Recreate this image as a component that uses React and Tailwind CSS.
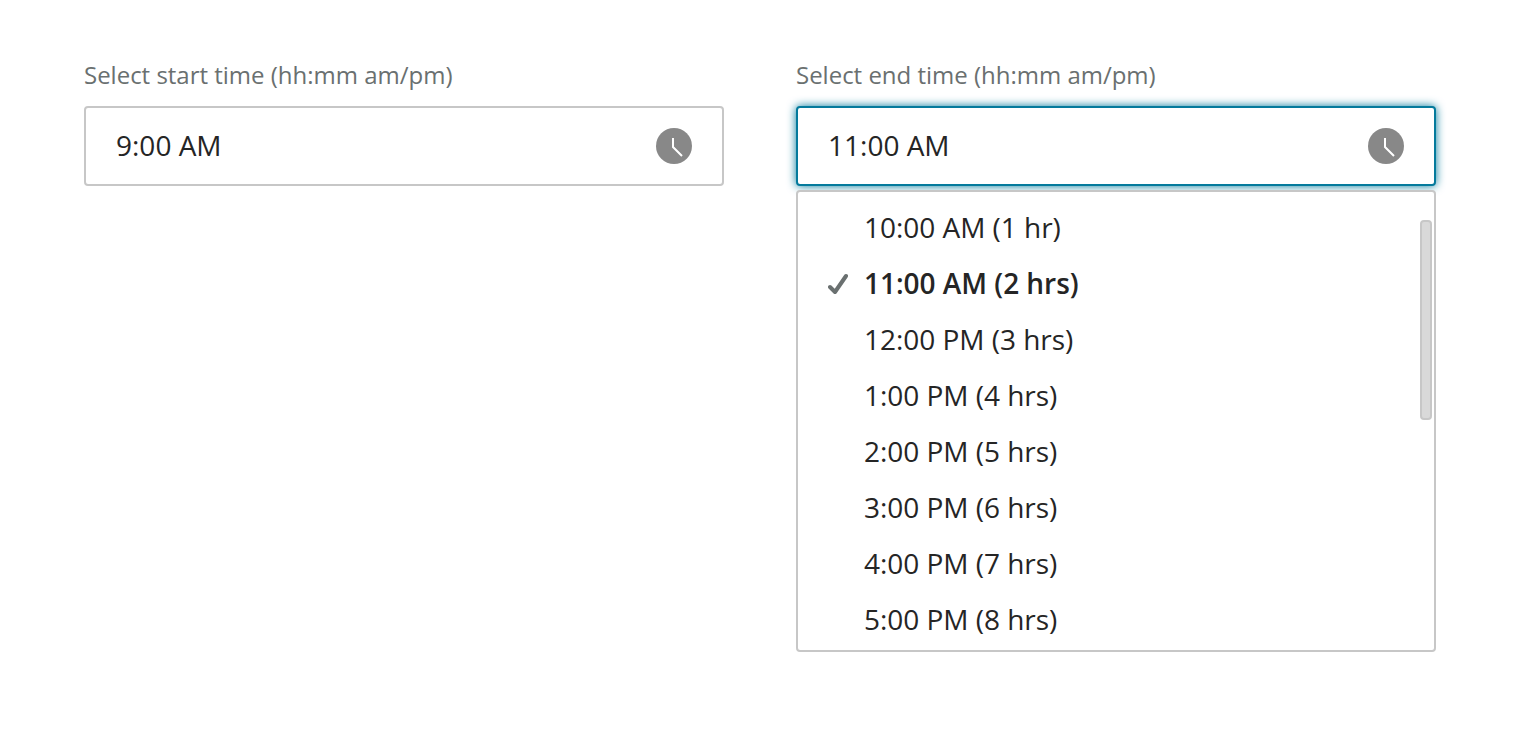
const options = [
  "10:00 AM (1 hr)",
  "11:00 AM (2 hrs)",
  "12:00 PM (3 hrs)",
  "1:00 PM (4 hrs)",
  "2:00 PM (5 hrs)",
  "3:00 PM (6 hrs)",
  "4:00 PM (7 hrs)",
  "5:00 PM (8 hrs)",
];

function ClockIcon() {
  return (
    <svg width="36" height="36" viewBox="0 0 36 36" fill="none">
      <circle cx="18" cy="18" r="18" fill="#888888" />
      <path d="M17 10V19L26 28" stroke="#ffffff" strokeWidth="2" />
    </svg>
  );
}

function CheckIcon() {
  return (
    <svg width="20" height="22" viewBox="0 0 20 22" fill="none">
      <path d="M2 14L7 19L18 3" stroke="#6a7070" strokeWidth="4" strokeLinecap="round" strokeLinejoin="round" />
    </svg>
  );
}

function TimeField({ label, value, focused }) {
  return (
    <>
      <div className="h-[43px] text-[24px] leading-[24px] tracking-[-0.01px] text-[#6a7070]">{label}</div>
      <div
        className={
          focused
            ? "flex h-20 items-center justify-between rounded-[4px] border-2 border-[#047a9c] bg-white px-[30px] shadow-[0_0_10px_#047a9c]"
            : "flex h-20 items-center justify-between rounded-[4px] border-2 border-[#c7c7c7] bg-white px-[30px]"
        }
      >
        <span className="pb-[2px] text-[28px] leading-[40px]">{value}</span>
        <ClockIcon />
      </div>
    </>
  );
}

export default function App() {
  return (
    <main className="flex h-[736px] items-start gap-[72px] bg-white pt-[63px] pl-[84px] font-['Open_Sans',sans-serif] text-[#252525] antialiased">
      <section className="w-[640px]">
        <TimeField label="Select start time (hh:mm am/pm)" value="9:00 AM" />
      </section>
      <section className="w-[640px]">
        <TimeField label="Select end time (hh:mm am/pm)" value="11:00 AM" focused />
        <div className="mt-1 flex h-[462px] justify-between overflow-hidden rounded-[4px] border-2 border-[#c7c7c7] bg-white">
          <ul className="pt-2 pl-[30px]">
            {options.map((option, i) => (
              <li key={option} className="flex h-14 items-center text-[28px] leading-[40px] tracking-[-0.03px]">
                <span className="w-9">{i === 1 && <CheckIcon />}</span>
                <span className={i === 1 ? "pb-[2px] font-semibold" : "pb-[2px]"}>{option}</span>
              </li>
            ))}
          </ul>
          <div className="mt-7 mr-[2px] h-[200px] w-3 rounded-[4px] border-2 border-[#c7c7c7] bg-[#d9d9d9]" />
        </div>
      </section>
    </main>
  );
}
